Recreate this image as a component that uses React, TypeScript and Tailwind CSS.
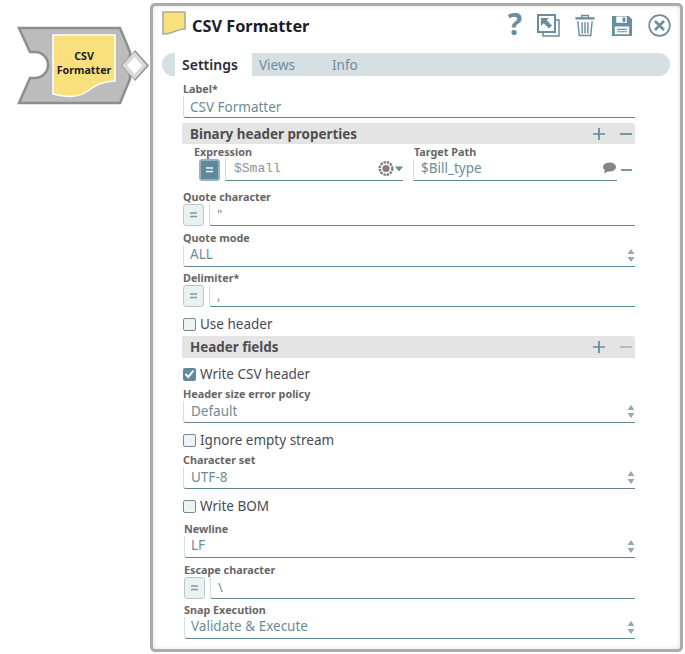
import React from "react";

const labelCls = "block h-[13px] text-[10.8px] leading-[11px] font-bold text-[#666]";
const valueCls = "text-[13.5px] text-[#6d8c99]";

function Updown() {
  return (
    <svg width="8" height="13" viewBox="0 0 8 13" className="absolute bottom-[4px] right-[0px]">
      <path d="M4 0 L7.5 5 H0.5 Z M0.5 8 H7.5 L4 13 Z" fill="#93a9b3" />
    </svg>
  );
}

function Select({ label, value, mt, ml = 0, lead = "leading-[19px]", pad = "pl-[6px]" }: { label: string; value: string; mt: string; ml?: number; lead?: string; pad?: string }) {
  return (
    <div className={mt} style={{ marginLeft: ml }}>
      <label className={labelCls}>{label}</label>
      <div className={"relative h-[22px] w-full rounded-bl-[3px] border-b border-l border-b-[#5f8796] border-l-[#d5dde0] " + pad + " " + lead + " " + valueCls}>
        {value}
        <Updown />
      </div>
    </div>
  );
}

function Eq({ active = false }: { active?: boolean }) {
  return (
    <div
      className={
        "flex h-[22px] w-[21px] shrink-0 items-center justify-center rounded-[3px] border " +
        (active ? "border-[#9db1ba] bg-[#5f8a9b] shadow-[inset_0_0_0_1px_#ffffff55]" : "border-[#bcc7cb] bg-[#eaf1f3]")
      }
    >
      <svg width="9" height="6" viewBox="0 0 9 6">
        <path d="M1 1 H8 M1 4.5 H8" stroke={active ? "#f2f6f7" : "#8a979c"} strokeWidth="1.3" />
      </svg>
    </div>
  );
}

function ExprField({ label, value, mt, ml = 0 }: { label: string; value: string; mt: string; ml?: number }) {
  return (
    <div className={mt} style={{ marginLeft: ml }}>
      <label className={labelCls}>{label}</label>
      <div className="flex h-[22px] gap-[5px]">
        <Eq />
        <div className="flex-1 rounded-bl-[3px] border-b border-l border-b-[#5f8796] border-l-[#d5dde0] pl-[7px] text-[13px] leading-[20px] text-[#6d8c99]">
          {value}
        </div>
      </div>
    </div>
  );
}

function Check({ label, checked = false, mt }: { label: string; checked?: boolean; mt: string }) {
  return (
    <div className={"flex h-[18px] items-center gap-[4px] " + mt}>
      {checked ? (
        <div className="flex h-[13px] w-[13px] items-center justify-center rounded-[2px] bg-[#5f8a9b]">
          <svg width="11" height="10" viewBox="0 0 11 10">
            <path d="M1.5 5 L4.3 8 L9.5 1.5" fill="none" stroke="#fff" strokeWidth="2" />
          </svg>
        </div>
      ) : (
        <div className="h-[13px] w-[13px] rounded-[2px] border border-[#6f8c98] bg-[#eef4f6]" />
      )}
      <span className="text-[13.5px] leading-[18px] text-[#4a4a55]">{label}</span>
    </div>
  );
}

function Band({ title, cls, minusDim = false }: { title: string; cls: string; minusDim?: boolean }) {
  return (
    <div className={"ml-[-1px] flex items-center justify-between rounded-tr-[3px] bg-[#e4e4e4] pl-[8px] " + cls}>
      <span className="text-[13.4px] font-bold text-[#4e4e4e]">{title}</span>
      <div className="flex items-center gap-[15px] pr-[3px]">
        <svg width="12" height="12" viewBox="0 0 12 12">
          <path d="M6 0 V12 M0 6 H12" stroke="#5f8a9b" strokeWidth="1.7" />
        </svg>
        <svg width="12" height="12" viewBox="0 0 12 12">
          <path d="M0 6 H12" stroke={minusDim ? "#a5bac2" : "#5f8a9b"} strokeWidth="1.7" />
        </svg>
      </div>
    </div>
  );
}

export default function App() {
  return (
    <div className="relative h-[654px] w-[685px] overflow-hidden bg-white pl-[150px] pt-[3px] font-['Noto_Sans',sans-serif]">
      {/* Snap node on its canvas */}
      <div className="absolute left-[17px] top-[26px] h-[80px] w-[135px]">
        <svg width="135" height="80" viewBox="0 0 135 80" className="absolute left-0 top-0">
          <path
            d="M2 2 H103 L113 26 V53 L103 77 H2 L13 52 H18 A13 13 0 0 0 18 26 H13 Z"
            fill="#bcbcbc"
            stroke="#8e8e8e"
            strokeWidth="2.5"
          />
          <path d="M118 24 L132 39.5 L118 55 L104 39.5 Z" fill="#8e8e8e" />
          <path d="M117.5 25.5 L130 39.5 L117.5 53.5 L105 39.5 Z" fill="#d9d9d9" />
          <path d="M117.5 31 L125 39.5 L117.5 48 L110 39.5 Z" fill="#fff" />
          <path
            d="M36 9 H98 V55 C83 56 77 60 71 65 C61 72 47 71 36 68 Z"
            fill="#f9e07c"
            stroke="#ffffff"
            strokeWidth="1.5"
          />
        </svg>
        <div className="absolute left-[36px] top-[24px] w-[62px] text-center text-[10.7px] font-bold leading-[13.5px] text-[#1c1c28]">
          CSV
          <br />
          Formatter
        </div>
      </div>

      {/* Settings panel */}
      <div className="h-[649px] w-[533px] rounded-[5px] border-[3px] border-[#ababab] bg-white shadow-[inset_0_0_5px_rgba(0,0,0,0.12)]">
        {/* Title */}
        <div className="flex h-[34px] items-start pl-[9px] pt-[8px]">
          <svg width="24" height="24" viewBox="0 0 24 24" className="mt-[-3px]">
            <path d="M1 1 H23 V18 C17 18 14 20 10 21.5 C7 22.5 4 23 1 23 Z" fill="#f9e07c" stroke="#a9a9a9" strokeWidth="1.6" />
          </svg>
          <span className="ml-[6px] mt-[-1px] text-[16.3px] font-bold leading-[26px] text-[#1c1c28]">CSV Formatter</span>
          <div className="ml-auto mr-[9px] flex items-start">
            <span className="mt-[-5px] text-[30px] font-bold leading-[30px] text-[#6a8e9d]">?</span>
            <svg width="23" height="23" viewBox="0 0 23 23" fill="none" className="ml-[15px]">
              <rect x="6" y="6" width="16" height="16" stroke="#6a8e9d" strokeWidth="1.5" />
              <rect x="1" y="1" width="17" height="17" fill="#fff" stroke="#6a8e9d" strokeWidth="2" />
              <path d="M4 4 H12 L9.7 6.3 L15 11.5 L12 14.5 L6.8 9.2 L4 12 Z" fill="#6a8e9d" />
            </svg>
            <svg width="20" height="23" viewBox="0 0 21 23" fill="none" className="ml-[15px]">
              <path d="M7 3 V1 H14 V3" stroke="#6a8e9d" strokeWidth="1.5" />
              <path d="M0.5 4 H20.5" stroke="#6a8e9d" strokeWidth="2.5" />
              <path d="M3 7 L4.5 22 H16.5 L18 7" stroke="#6a8e9d" strokeWidth="1.5" />
              <path d="M7.5 8 V20 M10.5 8 V20 M13.5 8 V20" stroke="#6a8e9d" strokeWidth="1.5" />
            </svg>
            <svg width="22" height="22" viewBox="0 0 22 23" className="ml-[16px] mt-[1px]">
              <path
                d="M0.5 1 H18 L21.5 4.5 V22 H0.5 Z M5 1.5 V8 H16 V1.5 Z M11.5 2.5 H14.5 V7 H11.5 Z M3.5 12 V20 H18.5 V12 Z"
                fill="#6a8e9d"
                fillRule="evenodd"
              />
              <path d="M6 15 H16 M6 17.5 H16" stroke="#6a8e9d" strokeWidth="1.2" />
            </svg>
            <svg width="23" height="23" viewBox="0 0 23 23" fill="none" className="ml-[15px]">
              <circle cx="11.5" cy="11.5" r="10.3" stroke="#6a8e9d" strokeWidth="1.7" />
              <path d="M7 7 L16 16 M16 7 L7 16" stroke="#6a8e9d" strokeWidth="2.6" />
            </svg>
          </div>
        </div>

        {/* Tabs */}
        <div className="ml-[9px] mt-[13px] flex h-[23px] w-[508px] rounded-full bg-[#d6dfe2] text-[13.5px] leading-[25px]">
          <div className="ml-[13px] w-[77px] bg-white pl-[7px] text-[14px] font-semibold leading-[23px] text-[#2b2b36]">Settings</div>
          <div className="w-[80px] pl-[7px] text-[#6a8e9d]">Views</div>
          <div className="text-[#6a8e9d]">Info</div>
        </div>

        {/* Form */}
        <div className="ml-[30px] mr-[45px] mt-[7px] w-[452px]">
          <div>
            <label className={labelCls}>Label*</label>
            <div className={"h-[22px] rounded-bl-[3px] border-b border-l border-b-[#5f8796] border-l-[#d5dde0] pl-[6px] leading-[23px] " + valueCls}>
              CSV Formatter
            </div>
          </div>

          <Band title="Binary header properties" cls="mt-[5px] h-[21px] pt-[1px]" />

          <div className="ml-[11px] flex">
            <div className="w-[209px] pt-[2px]">
              <label className={labelCls}>Expression</label>
              <div className="flex h-[22px] gap-[5px]">
                <div className="ml-[5px]">
                  <Eq active />
                </div>
                <div className="relative flex-1 border-b border-l border-b-[#5f8796] border-l-[#d5dde0] pl-[8px] font-['Liberation_Mono',monospace] text-[13px] leading-[20px] text-[#8c9497]">
                  $Small
                  <svg width="25" height="17" viewBox="0 0 25 17" className="absolute right-0 top-[1px]">
                    <circle cx="8" cy="8.5" r="6.3" fill="none" stroke="#7e7e7e" strokeWidth="2.4" strokeDasharray="2.4 0.9" />
                    <circle cx="8" cy="8.5" r="3.6" fill="#808080" />
                    <path d="M17 6.5 H25 L21 11.5 Z" fill="#5f8a9b" />
                  </svg>
                </div>
              </div>
            </div>
            <div className="ml-[10px] w-[219px] pt-[2px]">
              <label className={"pl-[1px] " + labelCls}>Target Path</label>
              <div className="flex h-[22px]">
                <div className={"relative flex-1 border-b border-l border-b-[#5f8796] border-l-[#d5dde0] pl-[7px] leading-[18px] " + valueCls}>
                  $Bill_type
                  <svg width="15" height="12" viewBox="0 0 15 12" className="absolute right-0 top-[3px]">
                    <ellipse cx="7.5" cy="5" rx="6.5" ry="4.5" fill="#858585" />
                    <path d="M3 7.5 L2 11.5 L7 9 Z" fill="#858585" />
                  </svg>
                </div>
                <svg width="11" height="22" viewBox="0 0 11 22" className="ml-[4px] shrink-0">
                  <path d="M0 11 H11" stroke="#5f8a9b" strokeWidth="1.7" />
                </svg>
              </div>
            </div>
          </div>

          <ExprField label="Quote character" value={'"'} mt="mt-[10px]" />
          <Select label="Quote mode" value="ALL" mt="mt-[6px]" />
          <ExprField label="Delimiter*" value="," mt="mt-[5px]" />
          <Check label="Use header" mt="mt-[8px]" />
          <Band title="Header fields" cls="mt-[3px] h-[22px]" minusDim />
          <Check label="Write CSV header" checked mt="mt-[7px]" />
          <Select label="Header size error policy" value="Default" mt="mt-[5px]" lead="leading-[21px]" pad="pl-[7px]" />
          <Check label="Ignore empty stream" mt="mt-[8px]" />
          <Select label="Character set" value="UTF-8" mt="mt-[5px]" lead="leading-[21px]" pad="pl-[7px]" />
          <Check label="Write BOM" mt="mt-[8px]" />
          <Select label="Newline" value="LF" mt="mt-[8px]" ml={1} />
          <ExprField label="Escape character" value="\" mt="mt-[6px]" ml={1} />
          <Select label="Snap Execution" value="Validate & Execute" mt="mt-[5px]" ml={1} />
        </div>
      </div>
    </div>
  );
}
